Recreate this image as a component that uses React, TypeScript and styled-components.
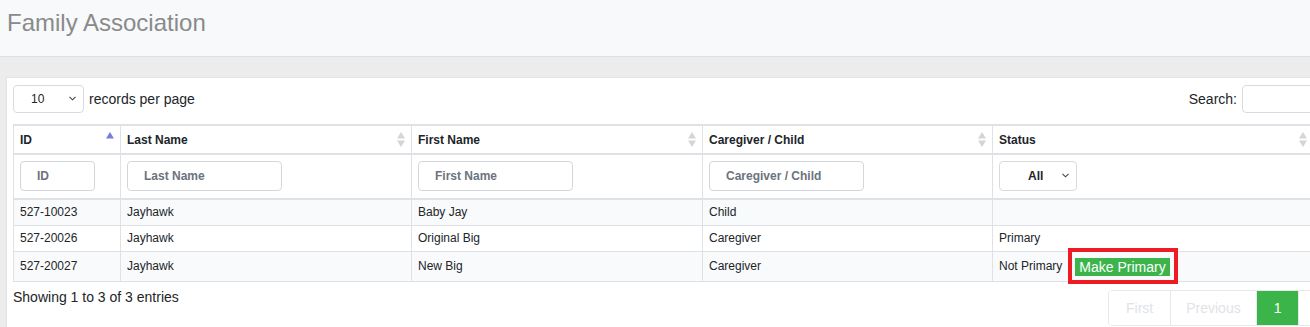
import React from "react";
import styled, { createGlobalStyle } from "styled-components";

const GlobalStyle = createGlobalStyle`
  html, body {
    margin: 0;
    padding: 0;
    overflow: hidden;
    background: #ececec;
    font-family: "Liberation Sans", Arial, sans-serif;
    color: #212529;
  }
  #root {
    width: 1310px;
    height: 327px;
    overflow: hidden;
  }
`;

const PageHeader = styled.header`
  height: 57px;
  box-sizing: border-box;
  padding: 9px 0 0 7px;
  background: #f8f9fb;
  border-bottom: 1px solid #dde1e5;
`;

const Title = styled.h1`
  margin: 0;
  font-size: 24px;
  line-height: 28px;
  font-weight: normal;
  color: #8a8a8a;
`;

const Content = styled.main`
  padding: 20px 0 0 6px;
`;

const Card = styled.section`
  width: 1430px;
  background: #fff;
  border-top: 1px solid #e2e4e7;
  border-left: 1px solid #e2e4e7;
  padding: 6px 0 0 6px;
  height: 260px;
`;

const TopBar = styled.div`
  width: 1410px;
  display: flex;
  justify-content: space-between;
  align-items: center;
  height: 28px;
  margin: 1px 0 11px;
  font-size: 14px;
`;

const Group = styled.label`
  display: flex;
  align-items: center;
  gap: 5px;
`;

const SelectWrap = styled.span<{ $w: number }>`
  position: relative;
  display: inline-block;
  width: ${(p) => p.$w}px;
`;

const Select = styled.select<{ $h: number; $bold?: boolean }>`
  appearance: none;
  width: 100%;
  height: ${(p) => p.$h}px;
  box-sizing: border-box;
  border: 1px solid #d7dbe0;
  border-radius: 4px;
  background: #fff;
  padding: 0 0 0 ${(p) => (p.$bold ? 28 : 17)}px;
  font-family: inherit;
  font-size: 12px;
  font-weight: ${(p) => (p.$bold ? "bold" : "normal")};
  color: #212529;
`;

const Chevron = styled.svg`
  position: absolute;
  right: 8px;
  top: 50%;
  margin-top: -3px;
  pointer-events: none;
`;

const SearchInput = styled.input`
  width: 181px;
  height: 28px;
  box-sizing: border-box;
  border: 1px solid #d7dbe0;
  border-radius: 4px;
`;

const Table = styled.table`
  width: 1300px;
  table-layout: fixed;
  border-collapse: collapse;
  font-size: 12px;
`;

const Th = styled.th`
  text-align: left;
  font-weight: bold;
  padding: 6px;
  line-height: 14px;
  border: 1px solid #dee2e6;
  border-top-width: 2px;
  border-bottom-width: 2px;
`;

const ThInner = styled.div`
  display: flex;
  justify-content: space-between;
  align-items: center;
`;

const FilterCell = styled.td`
  padding: 6px 6px 7px;
  border: 1px solid #dee2e6;
  border-bottom-width: 2px;
`;

const FilterInput = styled.input<{ $w: number }>`
  width: ${(p) => p.$w}px;
  height: 30px;
  box-sizing: border-box;
  border: 1px solid #d3d7dc;
  border-radius: 4px;
  padding: 0 0 0 16px;
  font-family: inherit;
  font-size: 12px;
  font-weight: bold;
  &::placeholder {
    color: #6c737c;
  }
`;

const Row = styled.tr<{ $striped?: boolean }>`
  background: ${(p) => (p.$striped ? "#f9fafb" : "#fff")};
`;

const Td = styled.td<{ $tall?: boolean }>`
  padding: 5px 6px;
  line-height: ${(p) => (p.$tall ? "19px" : "15px")};
  border: 1px solid #dee2e6;
  vertical-align: middle;
`;

const StatusLine = styled.div`
  display: flex;
  align-items: center;
  gap: 13px;
`;

const Marked = styled.span`
  position: relative;
  display: inline-block;
  &::after {
    content: "";
    position: absolute;
    top: -10px;
    bottom: -8px;
    left: -7px;
    right: -8px;
    border: 4px solid #ed1c24;
  }
`;

const MakePrimary = styled.button`
  display: block;
  height: 18px;
  padding: 0 4px;
  border: none;
  border-radius: 0;
  background: #3cb44b;
  color: #fff;
  font-family: inherit;
  font-size: 14px;
  line-height: 18px;
`;

const Footer = styled.div`
  display: grid;
  grid-template-columns: 1095px auto;
  align-items: start;
  padding-top: 8px;
`;

const Info = styled.div`
  font-size: 14px;
  line-height: 15px;
`;

const Pager = styled.nav`
  display: flex;
  border: 1px solid #e6e9ec;
  border-radius: 4px;
  overflow: hidden;
`;

const PageBtn = styled.span<{ $active?: boolean; $pad?: number }>`
  height: 34px;
  line-height: 34px;
  padding: 0 ${(p) => p.$pad ?? 17}px;
  font-size: 14px;
  border-left: 1px solid #e6e9ec;
  background: ${(p) => (p.$active ? "#3bb54a" : "#fff")};
  color: ${(p) => (p.$active ? "#fff" : "#dfe3e8")};
  &:first-child {
    border-left: none;
  }
`;

const SortIcon = ({ active }: { active?: boolean }) => (
  <svg width="8" height="15" viewBox="0 0 8 15">
    <polygon points="0,6.5 4,0 8,6.5" fill={active ? "#7b7bdc" : "#d5d5d5"} />
    {!active && <polygon points="0,8.5 4,15 8,8.5" fill="#d5d5d5" />}
  </svg>
);

const Caret = () => (
  <Chevron width="7" height="5" viewBox="0 0 7 5">
    <path d="M0.5 0.8 L3.5 3.8 L6.5 0.8" fill="none" stroke="#444" strokeWidth="1.1" />
  </Chevron>
);

const columns = [
  { label: "ID", width: 107, input: 75, active: true },
  { label: "Last Name", width: 291, input: 155 },
  { label: "First Name", width: 291, input: 155 },
  { label: "Caregiver / Child", width: 290, input: 155 },
  { label: "Status", width: 321 },
];

const rows = [
  { id: "527-10023", last: "Jayhawk", first: "Baby Jay", role: "Child", status: "" },
  { id: "527-20026", last: "Jayhawk", first: "Original Big", role: "Caregiver", status: "Primary" },
  { id: "527-20027", last: "Jayhawk", first: "New Big", role: "Caregiver", status: "Not Primary", action: true },
];

export default function App() {
  return (
    <>
      <GlobalStyle />
      <PageHeader>
        <Title>Family Association</Title>
      </PageHeader>
      <Content>
        <Card>
          <TopBar>
            <Group>
              <SelectWrap $w={71}>
                <Select $h={28} defaultValue="10">
                  <option>10</option>
                  <option>25</option>
                  <option>50</option>
                </Select>
                <Caret />
              </SelectWrap>
              records per page
            </Group>
            <Group>
              Search:
              <SearchInput />
            </Group>
          </TopBar>
          <Table>
            <colgroup>
              {columns.map((c) => (
                <col key={c.label} style={{ width: c.width }} />
              ))}
            </colgroup>
            <thead>
              <tr>
                {columns.map((c) => (
                  <Th key={c.label}>
                    <ThInner>
                      {c.label}
                      <SortIcon active={c.active} />
                    </ThInner>
                  </Th>
                ))}
              </tr>
              <tr>
                {columns.map((c) => (
                  <FilterCell key={c.label}>
                    {c.input ? (
                      <FilterInput $w={c.input} placeholder={c.label} />
                    ) : (
                      <SelectWrap $w={78}>
                        <Select $h={30} $bold defaultValue="All">
                          <option>All</option>
                          <option>Primary</option>
                          <option>Not Primary</option>
                        </Select>
                        <Caret />
                      </SelectWrap>
                    )}
                  </FilterCell>
                ))}
              </tr>
            </thead>
            <tbody>
              {rows.map((r, i) => (
                <Row key={r.id} $striped={i % 2 === 0}>
                  <Td $tall={r.action}>{r.id}</Td>
                  <Td $tall={r.action}>{r.last}</Td>
                  <Td $tall={r.action}>{r.first}</Td>
                  <Td $tall={r.action}>{r.role}</Td>
                  <Td $tall={r.action}>
                    {r.action ? (
                      <StatusLine>
                        {r.status}
                        <Marked>
                          <MakePrimary>Make Primary</MakePrimary>
                        </Marked>
                      </StatusLine>
                    ) : (
                      r.status
                    )}
                  </Td>
                </Row>
              ))}
            </tbody>
          </Table>
          <Footer>
            <Info>Showing 1 to 3 of 3 entries</Info>
            <Pager>
              <PageBtn>First</PageBtn>
              <PageBtn $pad={15}>Previous</PageBtn>
              <PageBtn $active>1</PageBtn>
              <PageBtn />
            </Pager>
          </Footer>
        </Card>
      </Content>
    </>
  );
}
